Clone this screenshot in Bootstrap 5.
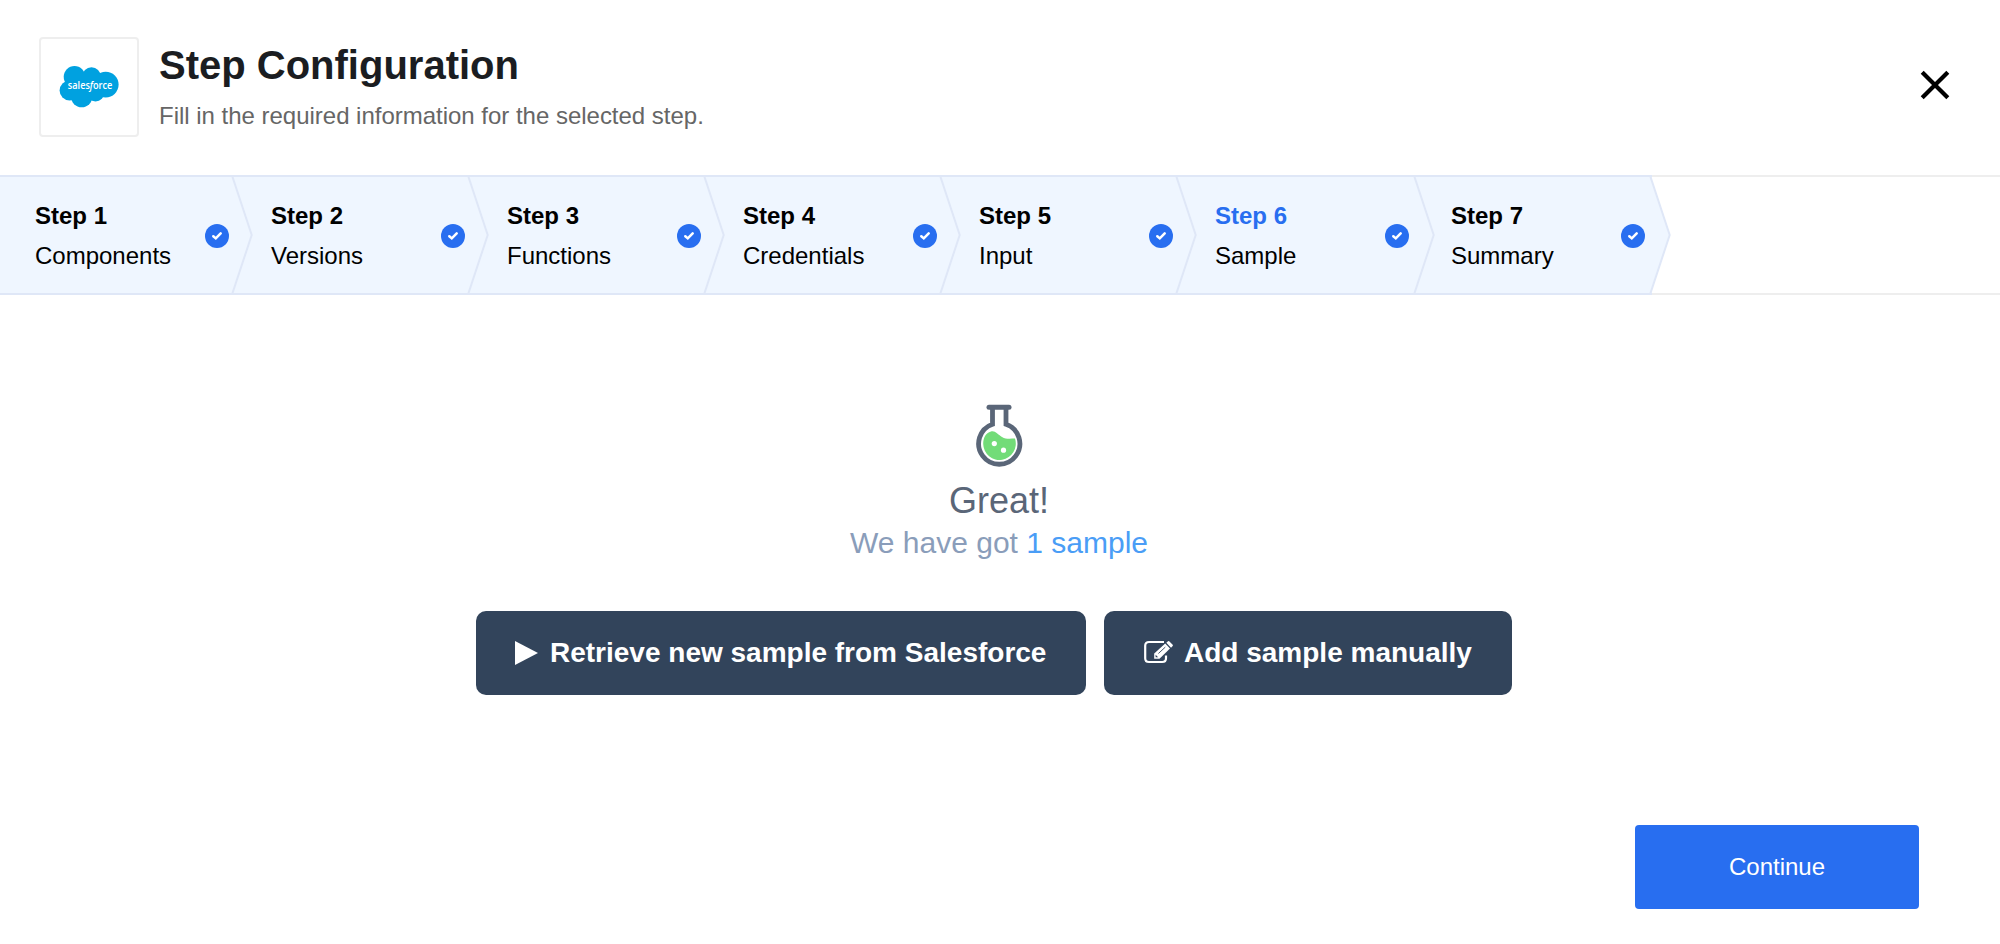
<!DOCTYPE html>
<html lang="en">
<head>
<meta charset="utf-8">
<meta name="viewport" content="width=device-width, initial-scale=1">
<title>Step Configuration</title>
<link rel="stylesheet" href="https://cdn.jsdelivr.net/npm/bootstrap@5.3.0/dist/css/bootstrap.min.css">
<style>
body{font-family:"Liberation Sans",Arial,sans-serif;background:#fff;color:#000;overflow:hidden}
.app{height:944px}
.head-bar{height:175px;padding:37px 50px 0 39px}
.logo-box{width:100px;height:100px;border:2px solid #eee;border-radius:4px;margin-right:20px}
.head-title{font-size:40px;line-height:46px;font-weight:700;color:#1b1d21;margin:5px 0 0}
.head-sub{font-size:24px;line-height:28px;letter-spacing:-.015px;color:#666;margin:14px 0 0}
.close-x{margin-top:33px;line-height:0}
.wizard{height:120px;border-top:2px solid #eee;border-bottom:2px solid #eee;margin:0}
.wizard-step{width:236px;height:120px;margin:-2px 0;padding:19px 7px 0 35px;background:#eff6ff;border-top:2px solid #dfe7f7;border-bottom:2px solid #dfe7f7;font-size:24px;line-height:40px}
.wizard-step.current strong{color:#286ef0}
.arrow-tip{right:-18px;top:0;z-index:1}
.wizard-step.wide .arrow-tip{right:-20px}
.tick{margin:28px 0 0 auto}
.flask{margin:109px 2px 0 0}
.great{font-size:36px;line-height:42px;color:#5a6678;margin:12px 2px 0 0}
.got{font-size:30px;line-height:36px;color:#8a9dba;margin:3px 2px 0 0}
.got a{color:#4a9df6;text-decoration:none}
.choices{gap:18px;margin:50px 12px 0 0}
.btn-slate,.btn-slate:hover{background:#32445b;color:#fff;border:0;border-radius:10px;height:84px;font-size:28px;line-height:32px;font-weight:700;padding:0}
.btn-retrieve{width:610px;padding-left:39px;gap:12px}
.btn-manual{width:408px;padding-left:40px;gap:10px}
.btn-continue,.btn-continue:hover{background:#286ef0;color:#fff;border:0;border-radius:4px;width:284px;height:84px;font-size:24px;margin:130px 81px 0 auto}
</style>
<script src="https://cdn.jsdelivr.net/npm/bootstrap@5.3.0/dist/js/bootstrap.bundle.min.js"></script>
</head>
<body>
<svg width="0" height="0" class="position-absolute" aria-hidden="true">
  <symbol id="tip" viewBox="0 0 24 116"><path d="M0 0H2.4L21.7 58 2.4 116H0Z" fill="#eff6ff"/><path d="M2.2-1 21.7 58 2.2 117" fill="none" stroke="#dfe7f7" stroke-width="2"/></symbol>
  <symbol id="tick" viewBox="0 0 24 24"><circle cx="12" cy="12" r="12" fill="#286ef0"/><path d="M8.300 12.200 10.800 14.400 15.700 9.400" fill="none" stroke="#fff" stroke-width="2.500" stroke-linecap="round"/></symbol>
</svg>
<main class="app d-flex flex-column">
  <header class="head-bar d-flex">
    <div class="logo-box d-flex align-items-center justify-content-center">
      <svg width="60" height="42" viewBox="0 0 60 42" role="img" aria-label="Salesforce">
        <g fill="#00a1e0"><circle cx="15.500" cy="10.800" r="10.800"/><circle cx="32.500" cy="10.500" r="9.300"/><circle cx="46.700" cy="18.600" r="12.900"/><circle cx="10.600" cy="24.500" r="10"/><circle cx="22.700" cy="30.600" r="10.700"/><circle cx="36.500" cy="26.500" r="9"/><path d="M8 12H46V28H12Z"/></g>
        <text x="8.800" y="22.500" textLength="44.600" lengthAdjust="spacingAndGlyphs" font-family="Open Sans" font-weight="600" font-size="11" fill="#fff">sales<tspan font-style="italic">f</tspan>orce</text>
      </svg>
    </div>
    <div>
      <h1 class="head-title">Step Configuration</h1>
      <p class="head-sub">Fill in the required information for the selected step.</p>
    </div>
    <div class="close-x ms-auto" role="button" aria-label="Close">
      <svg width="30" height="30" viewBox="0 0 30 30"><path d="M2.200 2.200 27.800 27.800M27.800 2.200 2.200 27.800" stroke="#000" stroke-width="4.200"/></svg>
    </div>
  </header>

  <nav class="wizard d-flex">
    <div class="wizard-step d-flex position-relative flex-shrink-0"><div><strong class="d-block">Step 1</strong>Components</div></div>
    <div class="wizard-step d-flex position-relative flex-shrink-0"><div><strong class="d-block">Step 2</strong>Versions</div></div>
    <div class="wizard-step d-flex position-relative flex-shrink-0"><div><strong class="d-block">Step 3</strong>Functions</div></div>
    <div class="wizard-step d-flex position-relative flex-shrink-0"><div><strong class="d-block">Step 4</strong>Credentials</div></div>
    <div class="wizard-step d-flex position-relative flex-shrink-0"><div><strong class="d-block">Step 5</strong>Input</div></div>
    <div class="wizard-step d-flex position-relative flex-shrink-0 current wide"><div><strong class="d-block">Step 6</strong>Sample</div></div>
    <div class="wizard-step d-flex position-relative flex-shrink-0 wide"><div><strong class="d-block">Step 7</strong>Summary</div></div>
  </nav>

  <section class="d-flex flex-column align-items-center">
    <svg class="flask" width="48" height="64" viewBox="0 0 48 64">
      <path d="M14 3.200H34" stroke="#5a6678" stroke-width="5" stroke-linecap="round"/>
      <path d="M17.500 4V20.200A20.600 20.600 0 1 0 31 20.200V4" fill="none" stroke="#5a6678" stroke-width="4.800"/>
      <path d="M8.200 40C8.200 34 10.500 29 16 27.500 20.500 26.500 22.500 30.500 27 33 31 35.400 35 34.600 40 34.600A16.300 16.300 0 1 1 8.200 40Z" fill="#72dc78"/>
      <circle cx="19.300" cy="39.600" r="2.600" fill="#fff"/><circle cx="28.500" cy="46.200" r="2.600" fill="#fff"/>
    </svg>
    <div class="great">Great!</div>
    <div class="got">We have got <a href="#">1 sample</a></div>
    <div class="choices d-flex">
      <button class="btn btn-slate btn-retrieve d-flex align-items-center">
        <svg width="23" height="24" viewBox="0 0 23 24"><path d="M0 0 23 12 0 24Z" fill="#fff"/></svg>
        <span>Retrieve new sample from Salesforce</span>
      </button>
      <button class="btn btn-slate btn-manual d-flex align-items-center">
        <svg width="30" height="26" viewBox="0 0 30 26" fill="none"><path d="M20 2H5Q1.200 2 1.200 5.800V18.200Q1.200 22 5 22H18.200Q22 22 22 18.200V15.500" stroke="#fff" stroke-width="2.200"/><path d="M10.200 18.700V13.500L21.200 3.600 26 8.600 15.500 18.700Z" fill="#fff"/><path d="M22.300 2.800 24 1.200Q24.600.8 25.200 1.300L28.700 4.700Q29.200 5.300 28.700 5.900L27 7.700Z" fill="#fff"/><path d="M14.400 13.500 21.300 7.100" stroke="#32445b" stroke-width=".9"/><path d="M11.600 14.800 14.100 17.300H11.600Z" fill="#32445b"/></svg>
        <span>Add sample manually</span>
      </button>
    </div>
  </section>
  <button class="btn btn-continue">Continue</button>
</main>
<script>
  document.querySelectorAll('.wizard-step').forEach(function (s) {
    s.insertAdjacentHTML('beforeend',
      '<svg class="tick" width="24" height="24"><use href="#tick"/></svg>' +
      '<svg class="arrow-tip position-absolute" width="24" height="116"><use href="#tip"/></svg>');
  });
</script>
</body>
</html>
